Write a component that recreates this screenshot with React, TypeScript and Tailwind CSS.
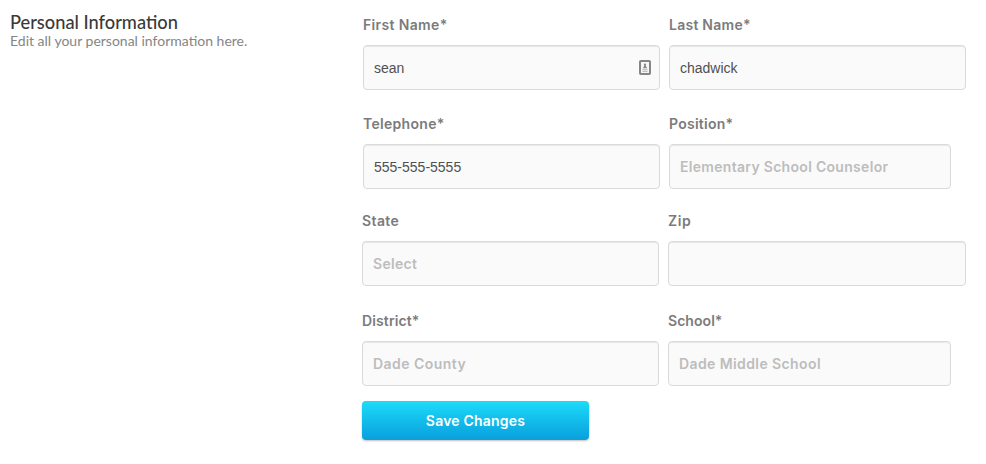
import React from "react";

const labelFont = "font-['Inter','Liberation_Sans',sans-serif] font-semibold text-[14px]";

type FieldProps = {
  label: string;
  labelTracking: string;
  width: string;
  value?: string;
  placeholder?: string;
  tracking?: string;
  children?: React.ReactNode;
};

function Field({ label, labelTracking, width, value, placeholder, tracking = "", children }: FieldProps) {
  return (
    <div className={`flex flex-col gap-[10px] ${width}`}>
      <label className={`block h-5 whitespace-nowrap leading-5 text-[#7b7b7b] ${labelFont} ${labelTracking}`}>
        <span>{label}</span>
      </label>
      <div className="flex h-[45px] items-center justify-between rounded-[4px] border border-[#dadada] bg-[#fafafa] pl-[10px] pr-2 shadow-[inset_0_1px_1px_rgba(0,0,0,0.07)]">
        {value && (
          <span className="whitespace-nowrap font-['Liberation_Sans',Arial,sans-serif] text-[14px] leading-5 text-[#505050]">{value}</span>
        )}
        {placeholder && (
          <span className={`whitespace-nowrap leading-5 text-[#bdbdbd] ${labelFont} ${tracking}`}>{placeholder}</span>
        )}
        {children}
      </div>
    </div>
  );
}

function AutofillIcon() {
  return (
    <svg width="12" height="15" viewBox="0 0 12 15" className="block">
      <rect x="1" y="1" width="10" height="13" rx="0.8" fill="#f6f6f6" stroke="#868686" strokeWidth="2" />
      <circle cx="6" cy="4.6" r="1.1" fill="#8b8b8b" />
      <path d="M5.2 5h1.6l.4 1.8 1.1 1.4H3.7l1.1-1.4z" fill="#8b8b8b" />
      <path d="M3.5 9.7h5M3.5 11.4h5" stroke="#b0b0b0" strokeWidth="0.9" />
    </svg>
  );
}

export default function App() {
  return (
    <main className="flex h-[464px] w-[986px] overflow-hidden bg-white">
      <section className="w-[362px] pl-[10px] pt-3 font-['Lato',sans-serif]">
        <h1 className="whitespace-nowrap text-[18.25px] font-medium leading-[20px] text-[#3a3a3a]">Personal Information</h1>
        <p className="whitespace-nowrap text-[14px] leading-[18px] text-[#858585]">Edit all your personal information here.</p>
      </section>
      <form className="flex flex-col pt-[15px]">
        <div className="flex gap-[9px] pl-px">
          <Field label="First Name*" labelTracking="tracking-[0.35px]" width="w-[297px]" value="sean">
            <AutofillIcon />
          </Field>
          <Field label="Last Name*" labelTracking="tracking-[0.25px]" width="w-[297px]" value="chadwick" />
        </div>
        <div className="mt-6 flex gap-[9px] pl-px">
          <Field label="Telephone*" labelTracking="tracking-[0.3px]" width="w-[297px]" value="555-555-5555" />
          <Field label="Position*" labelTracking="tracking-[0.25px]" width="w-[282px]" placeholder="Elementary School Counselor" tracking="tracking-[0.3px]" />
        </div>
        <div className="mt-[22px] flex gap-[9px]">
          <Field label="State" labelTracking="tracking-[0.4px]" width="w-[297px]" placeholder="Select" tracking="tracking-[0.3px]" />
          <Field label="Zip" labelTracking="tracking-[0.6px]" width="w-[298px]" />
        </div>
        <div className="mt-[25px] flex gap-[9px]">
          <Field label="District*" labelTracking="tracking-[0.12px]" width="w-[297px]" placeholder="Dade County" tracking="tracking-[0.45px]" />
          <Field label="School*" labelTracking="tracking-[0.05px]" width="w-[283px]" placeholder="Dade Middle School" tracking="tracking-[0.4px]" />
        </div>
        <button type="button" className={`mt-[15px] h-[39px] w-[227px] rounded-[4px] bg-linear-to-b from-[#1edbf8] to-[#0a9fdd] leading-5 tracking-[0.2px] text-white shadow-[0_1px_2px_rgba(0,0,0,0.25)] ${labelFont}`}>
          Save Changes
        </button>
      </form>
    </main>
  );
}
